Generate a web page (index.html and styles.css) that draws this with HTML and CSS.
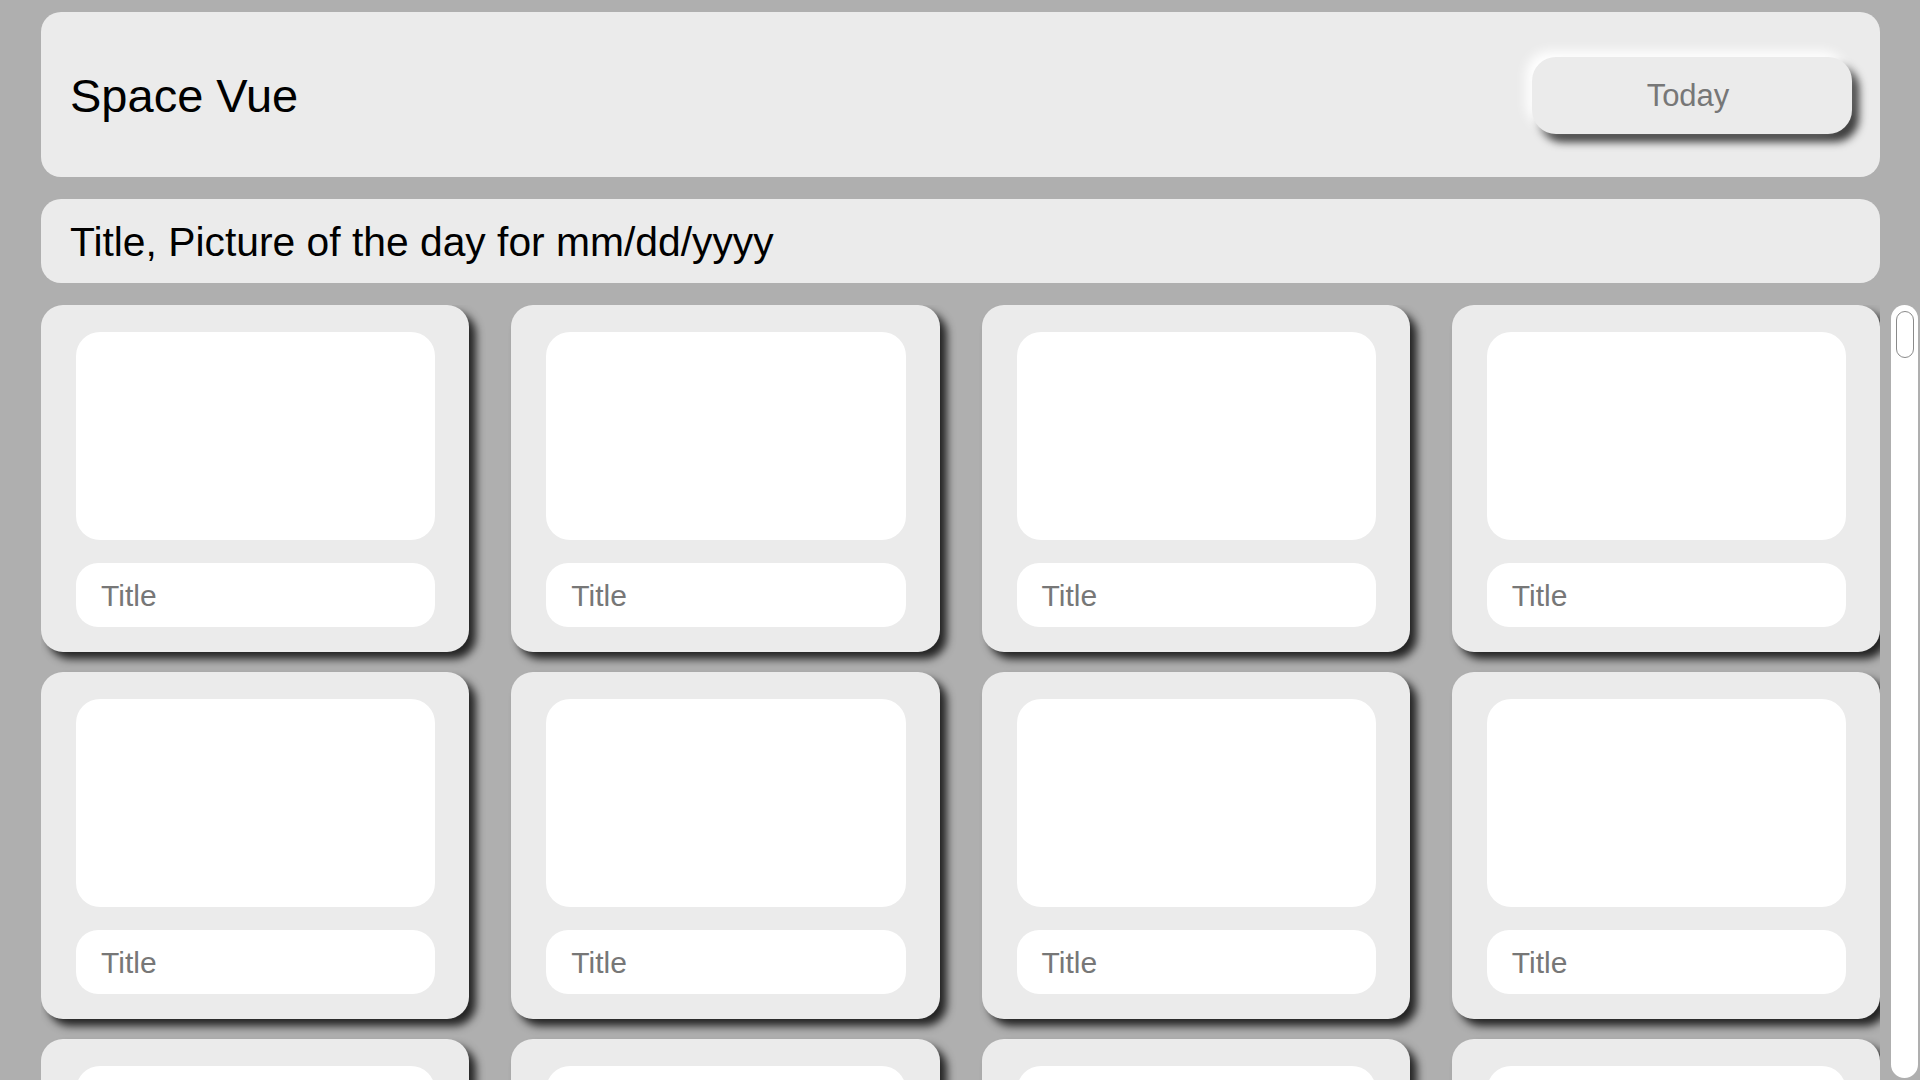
FILE: index.html
```html
<!DOCTYPE html>
<html lang="en">
<head>
<meta charset="utf-8">
<title>Space Vue</title>
<link rel="stylesheet" href="styles.css">
</head>
<body>
<header class="topbar">
  <h1 class="brand">Space Vue</h1>
  <button class="today-btn" type="button">Today</button>
</header>
<section class="potd">
  <h2 class="potd-title">Title, Picture of the day for mm/dd/yyyy</h2>
</section>
<div class="content-row">
  <main class="feed">
    <div class="grid">
      <div class="card"><div class="pic"></div><div class="cap">Title</div></div>
      <div class="card"><div class="pic"></div><div class="cap">Title</div></div>
      <div class="card"><div class="pic"></div><div class="cap">Title</div></div>
      <div class="card"><div class="pic"></div><div class="cap">Title</div></div>
      <div class="card"><div class="pic"></div><div class="cap">Title</div></div>
      <div class="card"><div class="pic"></div><div class="cap">Title</div></div>
      <div class="card"><div class="pic"></div><div class="cap">Title</div></div>
      <div class="card"><div class="pic"></div><div class="cap">Title</div></div>
      <div class="card"><div class="pic"></div></div>
      <div class="card"><div class="pic"></div></div>
      <div class="card"><div class="pic"></div></div>
      <div class="card"><div class="pic"></div></div>
    </div>
  </main>
  <div class="rail" aria-hidden="true">
    <div class="track"><div class="thumb"></div></div>
  </div>
</div>
</body>
</html>
```
FILE: styles.css
```css
html, body {
  margin: 0;
  height: 100%;
}

body {
  box-sizing: border-box;
  height: 1080px;
  overflow: hidden;
  background: #afafaf;
  padding: 12px 0 0 41px;
  display: flex;
  flex-direction: column;
  font-family: "Liberation Sans", Arial, Helvetica, sans-serif;
  color: #000;
}

.topbar {
  flex: none;
  height: 165px;
  box-sizing: border-box;
  margin-right: 40px;
  background: #ebebeb;
  border-radius: 20px;
  display: flex;
  align-items: center;
  justify-content: space-between;
  padding: 2px 28px 0 29px;
}

.brand {
  margin: 0;
  font-size: 47px;
  font-weight: 400;
  line-height: 1;
}

.today-btn {
  width: 320px;
  height: 77px;
  border: none;
  border-radius: 24px;
  background: #ebebeb;
  color: #777;
  font-family: inherit;
  font-size: 31px;
  padding: 0 8px 0 0;
  box-shadow: -6px -6px 12px #ffffff, 7px 8px 8px rgba(0, 0, 0, 0.75);
}

.potd {
  flex: none;
  margin: 22px 40px 0 0;
  height: 84px;
  box-sizing: border-box;
  background: #ebebeb;
  border-radius: 20px;
  display: flex;
  align-items: center;
  padding: 2px 0 0 29px;
}

.potd-title {
  margin: 0;
  font-size: 40.8px;
  font-weight: 400;
  line-height: 1;
}

.content-row {
  flex: 1;
  min-height: 0;
  margin-top: 22px;
  display: flex;
}

.feed {
  flex: 1;
  min-width: 0;
  overflow: hidden;
}

.rail {
  flex: none;
  width: 40px;
  box-sizing: border-box;
  padding: 0 2px 2px 11px;
}

.track {
  height: 100%;
  box-sizing: border-box;
  background: #ffffff;
  border-radius: 14px;
  padding: 6px 4px 0 5px;
}

.thumb {
  height: 47px;
  box-sizing: border-box;
  background: #ffffff;
  border: 1px solid #8a8a8a;
  border-radius: 9px;
}

.grid {
  display: grid;
  grid-template-columns: repeat(4, 1fr);
  column-gap: 42px;
  row-gap: 20px;
}

.card {
  height: 347px;
  box-sizing: border-box;
  background: #ebebeb;
  border-radius: 22px;
  padding: 27px 34px 25px 35px;
  display: flex;
  flex-direction: column;
  gap: 23px;
  box-shadow: 7px 7px 8px rgba(0, 0, 0, 0.8);
}

.pic {
  height: 208px;
  flex: none;
  background: #ffffff;
  border-radius: 24px;
}

.cap {
  height: 64px;
  flex: none;
  box-sizing: border-box;
  background: #ffffff;
  border-radius: 22px;
  display: flex;
  align-items: center;
  padding: 2px 0 0 25px;
  font-size: 30px;
  color: #777;
}
```
